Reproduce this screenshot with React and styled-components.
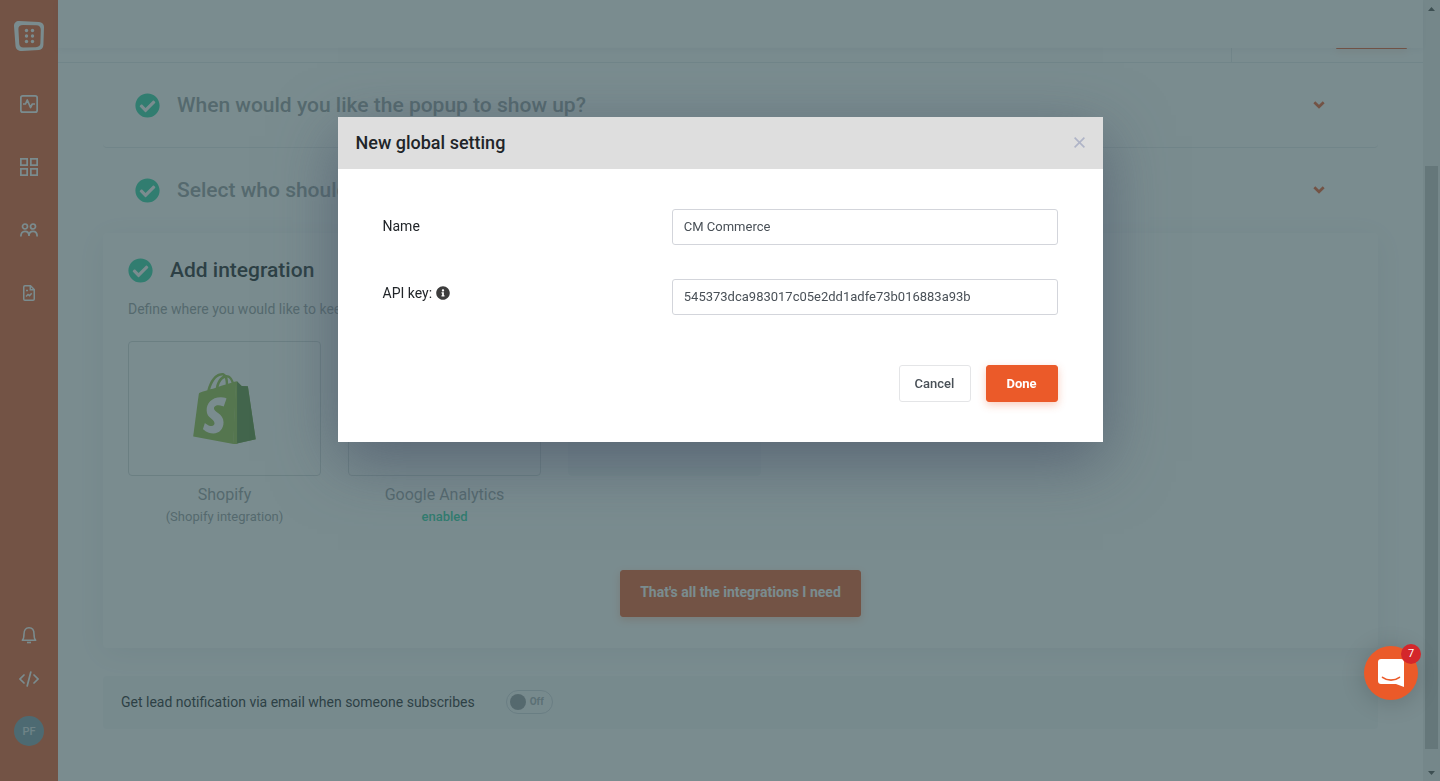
import React, { useState } from 'react';
import styled, { createGlobalStyle } from 'styled-components';
import { FaCheckCircle, FaInfoCircle } from 'react-icons/fa';
import { SiShopify } from 'react-icons/si';


const orange = '#eb5a29';
const green = '#2dd2a4';
const dark = '#212529';
const muted = '#959ba0';
const line = '#e6e9ec';

const GlobalStyle = createGlobalStyle`
  * {
    box-sizing: border-box;
  }

  body {
    margin: 0;
    background: #fff;
    color: ${dark};
    font-family: Roboto, "Liberation Sans", sans-serif;
    font-size: 14px;
  }

  button, input {
    font-family: inherit;
  }
`

const Page = styled.div`
  display: flex;
  min-height: 100vh;
`

const Sidebar = styled.nav`
  width: 58px;
  flex: none;
  display: flex;
  flex-direction: column;
  justify-content: space-between;
  background: ${orange};
`

const NavGroup = styled.div`
  display: flex;
  flex-direction: column;
  align-items: center;
  gap: ${({ $gap }) => $gap}px;
  padding: ${({ $padding }) => $padding};
`

const NavLink = styled.a`
  display: flex;
  align-items: center;
  justify-content: center;
  width: 30px;
  height: 30px;
  color: #fff;
`

const Logo = styled(NavLink)`
  margin-bottom: 5px;
`

const Avatar = styled(NavLink)`
  margin-top: 8px;
  border-radius: 50%;
  background: #7d9eab;
  color: #dfe5e8;
  font-size: 11px;
  font-weight: 500;
  text-decoration: none;
`

const Main = styled.main`
  flex: 1;
  min-width: 0;
`

const TopBar = styled.header`
  height: 48px;
  position: relative;
  box-shadow: 0 2px 6px rgba(60, 80, 110, 0.08);
`

const PublishBar = styled.div`
  height: 15px;
  display: flex;
  justify-content: flex-end;
  border-bottom: 1px solid ${line};
`

const PublishActions = styled.div`
  width: 192px;
  padding: 0 16px;
  display: flex;
  justify-content: flex-end;
  border-left: 1px solid ${line};
`

const PublishEdge = styled.div`
  width: 71px;
  height: 1px;
  border-radius: 0 0 3px 3px;
  background: ${orange};
  box-shadow: 0 2px 6px rgba(235, 90, 41, 0.5);
`

const Content = styled.div`
  padding: 0 45px 48px;
`

const Step = styled.button`
  width: 100%;
  height: 85px;
  display: flex;
  align-items: center;
  gap: 17px;
  padding: 0 53px 0 32px;
  border: 0;
  border-bottom: 1px solid ${({ $last }) => ($last ? 'transparent' : line)};
  border-radius: 4px;
  background: none;
  text-align: left;
`

const StepTitle = styled.span`
  flex: 1;
  color: ${muted};
  font-size: 21px;
  font-weight: 500;
`

const Check = styled(FaCheckCircle)`
  width: 25px;
  height: 25px;
  flex: none;
  color: ${green};
`

const Card = styled.section`
  padding: 24px 25px 31px;
  border-radius: 4px;
  box-shadow: 0 5px 30px rgba(60, 90, 130, 0.11);
`

const CardHeader = styled.div`
  display: flex;
  align-items: center;
  gap: 17px;
  height: 26px;
`

const CardTitle = styled.h2`
  margin: 0;
  font-size: 21px;
  font-weight: 500;
`

const Description = styled.p`
  margin: 16px 0 22px;
  color: ${muted};
  font-size: 14px;
  line-height: 20px;
`

const Tiles = styled.div`
  display: flex;
  gap: 27px;
  min-height: 185px;
`

const Tile = styled.div`
  width: 193px;
  text-align: center;
`

const TileBox = styled.button`
  width: 100%;
  height: 135px;
  display: flex;
  align-items: center;
  justify-content: center;
  padding: 0;
  border: 1px solid ${({ $filled }) => ($filled ? '#f4f6f8' : '#d3d8da')};
  border-radius: 4px;
  background: ${({ $filled }) => ($filled ? '#f4f6f8' : 'transparent')};
`

const TileName = styled.div`
  margin-top: 8px;
  color: ${muted};
  font-size: 16px;
  line-height: 22px;
`

const TileStatus = styled.div`
  color: ${({ $enabled }) => ($enabled ? green : muted)};
  font-size: 13px;
  font-weight: ${({ $enabled }) => ($enabled ? 500 : 400)};
  line-height: 22px;
`

const CardFooter = styled.div`
  display: flex;
  justify-content: center;
  margin-top: 42px;
`

const Button = styled.button`
  height: 37px;
  min-width: 72px;
  padding: 0 15px;
  border: 1px solid #e4e5e7;
  border-radius: 3px;
  background: #fff;
  color: #495057;
  font-size: 13px;
  font-weight: 500;
`

const PrimaryButton = styled(Button)`
  border-color: ${orange};
  background: ${orange};
  color: #fff;
  font-weight: 700;
  box-shadow: 0 3px 8px rgba(235, 90, 41, 0.3);
`

const FinishButton = styled(PrimaryButton)`
  height: 47px;
  padding: 0 19px 3px;
  font-size: 14px;
`

const Notification = styled.div`
  height: 53px;
  display: flex;
  align-items: center;
  gap: 31px;
  margin-top: 28px;
  padding: 0 18px 2px;
  border-radius: 4px;
  background: #f7f8fa;
`

const NotificationLabel = styled.label`
  font-size: 14px;
`

const Toggle = styled.span`
  width: 47px;
  height: 24px;
  display: flex;
  align-items: center;
  gap: 4px;
  padding: 0 3px;
  border: 1px solid #cfd6dc;
  border-radius: 12px;
  color: #a6adb3;
  font-size: 10px;
  font-weight: 700;
`

const ToggleKnob = styled.input`
  appearance: none;
  width: 16px;
  height: 16px;
  margin: 0;
  border-radius: 50%;
  background: ${muted};
`

const ScrollBar = styled.div`
  width: 17px;
  flex: none;
  display: flex;
  flex-direction: column;
  align-items: center;
  background: #f1f1f1;
`

const ScrollSpace = styled.div`
  flex: ${({ $share }) => $share};
`

const ScrollThumb = styled(ScrollSpace)`
  width: 13px;
  background: #c1c1c1;
`

const Backdrop = styled.div`
  position: fixed;
  inset: 0;
  padding: 117px 16px 16px;
  overflow: hidden;
  background: rgba(52, 79, 84, 0.655);
`

const Modal = styled.form`
  max-width: 765px;
  margin: 0 auto;
  background: #fff;
  box-shadow: 0 19px 60px rgba(69, 80, 101, 0.65);
`

const ModalHeader = styled.div`
  height: 52px;
  display: flex;
  align-items: center;
  justify-content: space-between;
  padding: 0 18px 2px;
  background: #dedede;
`

const ModalTitle = styled.h1`
  margin: 0;
  font-size: 18px;
  font-weight: 500;
`

const CloseButton = styled.button`
  display: flex;
  padding: 0;
  border: 0;
  background: none;
  color: #afb4c7;
`

const ModalBody = styled.div`
  padding: 40px 45px;
`

const Field = styled.div`
  display: grid;
  grid-template-columns: 3fr 4fr;
  margin-bottom: 34px;
`

const FieldLabel = styled.label`
  display: flex;
  align-items: center;
  align-self: start;
  gap: 4px;
  height: ${({ $hint }) => ($hint ? 28 : 34)}px;
  font-size: 14px;
`

const Input = styled.input`
  width: 100%;
  height: 36px;
  padding: 0 11px 1px;
  border: 1px solid #d3d5db;
  border-radius: 3px;
  outline: none;
  color: #495057;
  font-size: 13px;
`

const Actions = styled.div`
  display: flex;
  justify-content: flex-end;
  gap: 15px;
  padding-top: 16px;
`

const Launcher = styled.button`
  position: fixed;
  right: 22px;
  bottom: 81px;
  width: 54px;
  height: 54px;
  padding: 0;
  border: 0;
  border-radius: 50%;
  background: ${orange};
  box-shadow: 0 2px 24px rgba(0, 0, 0, 0.18);
`

const LauncherIcon = styled.svg`
  display: block;
  margin: auto;
`

const Badge = styled.span`
  position: absolute;
  top: -2px;
  right: -3px;
  width: 20px;
  height: 20px;
  border-radius: 50%;
  background: #d4262b;
  color: #fff;
  font-size: 11px;
  line-height: 20px;
`


const LogoIcon = () => (
  <svg width="30" height="30" viewBox="0 0 30 30" fill="currentColor">
    <path
      fillRule="evenodd"
      d="M5 0 25 1C28 1.300 30 3 30 6L29.400 24C29.200 27 27.500 28.700 25 29L8 30C4 30 2 28.500 1.500 25L0 5C0 2 2 0 5 0ZM9 4C6 4 4.300 5.300 4.400 8L5.200 22.500C5.400 25.300 7 26.700 9.500 26.600L22 26.200C24.800 26 26.200 24.800 26.400 22.300L26.800 9C26.800 6 25.200 4.400 22.500 4.300Z"
    />
    {[9.5, 15, 20.5].map(y => (
      <g key={y}>
        <circle cx="12.5" cy={y} r="1.7" />
        <circle cx="18.5" cy={y} r="1.7" />
      </g>
    ))}
  </svg>
);

const ActivityIcon = () => (
  <svg width="18" height="18" viewBox="0 0 18 18" fill="none" stroke="currentColor" strokeWidth="1.700">
    <rect x="0.850" y="0.850" width="16.300" height="16.300" rx="2" />
    <path d="M3 9H5.500L7.300 5L10.500 12.500L12.300 9H15" strokeLinejoin="round" />
  </svg>
);

const GridIcon = () => (
  <svg width="18" height="18" viewBox="0 0 18 18" fill="none" stroke="currentColor" strokeWidth="1.700">
    <rect x="0.850" y="0.850" width="6.300" height="6.300" />
    <rect x="10.850" y="0.850" width="6.300" height="6.300" />
    <rect x="0.850" y="10.850" width="6.300" height="6.300" />
    <rect x="10.850" y="10.850" width="6.300" height="6.300" />
  </svg>
);

const PeopleIcon = () => (
  <svg width="18" height="14" viewBox="0 0 18 14" fill="none" stroke="currentColor" strokeWidth="1.700">
    <circle cx="5" cy="3.500" r="2.500" />
    <circle cx="13" cy="3.500" r="2.500" />
    <path d="M0.850 13.500C0.850 10 2.500 8.400 5 8.400S9 10 9 13C9 10 10.500 8.400 13 8.400S17.150 10 17.150 13.500" />
  </svg>
);

const ReportIcon = () => (
  <svg width="12" height="16" viewBox="0 0 12 16" fill="none" stroke="currentColor" strokeWidth="1.500">
    <path d="M2 0.750H7.500L11.250 4.500V14C11.250 14.800 10.800 15.250 10 15.250H2C1.200 15.250 0.750 14.800 0.750 14V2C0.750 1.200 1.200 0.750 2 0.750Z" />
    <path d="M7.300 1V4.700H11M3 5.500H5M3 11.500L5 9.500L6.500 10.700L8.700 8.300" />
  </svg>
);

const BellIcon = () => (
  <svg width="16" height="17" viewBox="0 0 16 17" fill="none" stroke="currentColor" strokeWidth="1.500">
    <path d="M1.300 13.300C2.800 11.800 3 10.500 3 7C3 3 4.800 0.800 8 0.800S13 3 13 7C13 10.500 13.200 11.800 14.700 13.300Z" strokeLinejoin="round" />
    <path d="M6 15.500H10" strokeWidth="1.600" />
  </svg>
);

const CodeIcon = () => (
  <svg width="20" height="16" viewBox="0 0 20 16" fill="none" stroke="currentColor" strokeWidth="1.700" strokeLinecap="round">
    <path d="M5 4L1 8L5 12M15 4L19 8L15 12" />
    <path d="M11.800 1L8.200 15" />
  </svg>
);

const ChevronIcon = () => (
  <svg width="12" height="8" viewBox="0 0 12 8" fill="none" stroke={orange} strokeWidth="2.700">
    <path d="M1.300 1.200L6 5.800L10.700 1.200" />
  </svg>
);

const CloseIcon = () => (
  <svg width="11" height="11" viewBox="0 0 11 11" fill="none" stroke="currentColor" strokeWidth="1.600">
    <path d="M0.600 0.600L10.400 10.400M10.400 0.600L0.600 10.400" />
  </svg>
);

// two-tone bag: the front comes from the icon, the side is laid over it
const ShopifyLogo = () => (
  <svg width="71" height="71" viewBox="0 0 24 24">
    <SiShopify size={24} color="#95bf47" />
    <path fill="#95bf47" d="M15.800 2.870L16.300 2.800V24L14.900 23.980Z" />
    <path fill="#5e8e3e" d="M16.250 2.850L17.790 4.360L19.900 4.500L22.560 22.420L16.250 23.800Z" />
  </svg>
);

const ArrowIcon = ({ down }) => (
  <svg width="17" height="17" viewBox="0 0 17 17" fill="#505050">
    <path d={down ? 'M5 7H12L8.500 11Z' : 'M5 11H12L8.500 7Z'} />
  </svg>
);

const steps = ['When would you like the popup to show up?', 'Select who should'];

const navItems = [
  { id: 'activity', icon: <ActivityIcon /> },
  { id: 'grid', icon: <GridIcon /> },
  { id: 'people', icon: <PeopleIcon /> },
  { id: 'report', icon: <ReportIcon /> },
];


const App = () => {
  const [name, setName] = useState('CM Commerce');
  const [apiKey, setApiKey] = useState('545373dca983017c05e2dd1adfe73b016883a93b');

  return (
    <>
      <GlobalStyle />
      <Page>
        <Sidebar>
          <NavGroup $gap={33} $padding="21px 0 0">
            <Logo href="#home"><LogoIcon /></Logo>
            {navItems.map(({ id, icon }) => <NavLink key={id} href={`#${id}`}>{icon}</NavLink>)}
          </NavGroup>
          <NavGroup $gap={14} $padding="0 0 35px">
            <NavLink href="#bell"><BellIcon /></NavLink>
            <NavLink href="#code"><CodeIcon /></NavLink>
            <Avatar href="#profile">PF</Avatar>
          </NavGroup>
        </Sidebar>

        <Main>
          <TopBar />
          <PublishBar>
            <PublishActions><PublishEdge /></PublishActions>
          </PublishBar>
          <Content>
            {steps.map((title, i) => (
              <Step key={title} type="button" $last={i === steps.length - 1}>
                <Check />
                <StepTitle>{title}</StepTitle>
                <ChevronIcon />
              </Step>
            ))}

            <Card>
              <CardHeader>
                <Check />
                <CardTitle>Add integration</CardTitle>
              </CardHeader>
              <Description>Define where you would like to keep</Description>
              <Tiles>
                <Tile>
                  <TileBox type="button"><ShopifyLogo /></TileBox>
                  <TileName>Shopify</TileName>
                  <TileStatus>(Shopify integration)</TileStatus>
                </Tile>
                <Tile>
                  <TileBox type="button" />
                  <TileName>Google Analytics</TileName>
                  <TileStatus $enabled>enabled</TileStatus>
                </Tile>
                <Tile>
                  <TileBox type="button" $filled />
                </Tile>
              </Tiles>
              <CardFooter>
                <FinishButton type="button">That's all the integrations I need</FinishButton>
              </CardFooter>
            </Card>

            <Notification>
              <NotificationLabel htmlFor="notify">
                Get lead notification via email when someone subscribes
              </NotificationLabel>
              <Toggle>
                <ToggleKnob id="notify" type="checkbox" />
                Off
              </Toggle>
            </Notification>
          </Content>
        </Main>

        <ScrollBar>
          <ArrowIcon />
          <ScrollSpace $share={149} />
          <ScrollThumb $share={583} />
          <ScrollSpace $share={15} />
          <ArrowIcon down />
        </ScrollBar>
      </Page>

      <Backdrop>
        <Modal onSubmit={e => e.preventDefault()}>
          <ModalHeader>
            <ModalTitle>New global setting</ModalTitle>
            <CloseButton type="button" aria-label="Close"><CloseIcon /></CloseButton>
          </ModalHeader>
          <ModalBody>
            <Field>
              <FieldLabel htmlFor="name">Name</FieldLabel>
              <Input id="name" value={name} onChange={e => setName(e.target.value)} />
            </Field>
            <Field>
              <FieldLabel htmlFor="api-key" $hint>
                API key: <FaInfoCircle size={14} color="#3d3d3d" />
              </FieldLabel>
              <Input id="api-key" value={apiKey} onChange={e => setApiKey(e.target.value)} />
            </Field>
            <Actions>
              <Button type="button">Cancel</Button>
              <PrimaryButton type="submit">Done</PrimaryButton>
            </Actions>
          </ModalBody>
        </Modal>
      </Backdrop>

      <Launcher type="button">
        <LauncherIcon width="26" height="28" viewBox="0 0 26 28">
          <path fill="#fff" d="M3 0H23C24.700 0 26 1.300 26 3V28L18 25H3C1.300 25 0 23.700 0 22V3C0 1.300 1.300 0 3 0Z" />
          <path fill="none" stroke={orange} strokeWidth="1.600" strokeLinecap="round" d="M4.500 18.300C9.500 22 16.500 22 21.500 18.300" />
        </LauncherIcon>
        <Badge>7</Badge>
      </Launcher>
    </>
  );
}


export default App;
